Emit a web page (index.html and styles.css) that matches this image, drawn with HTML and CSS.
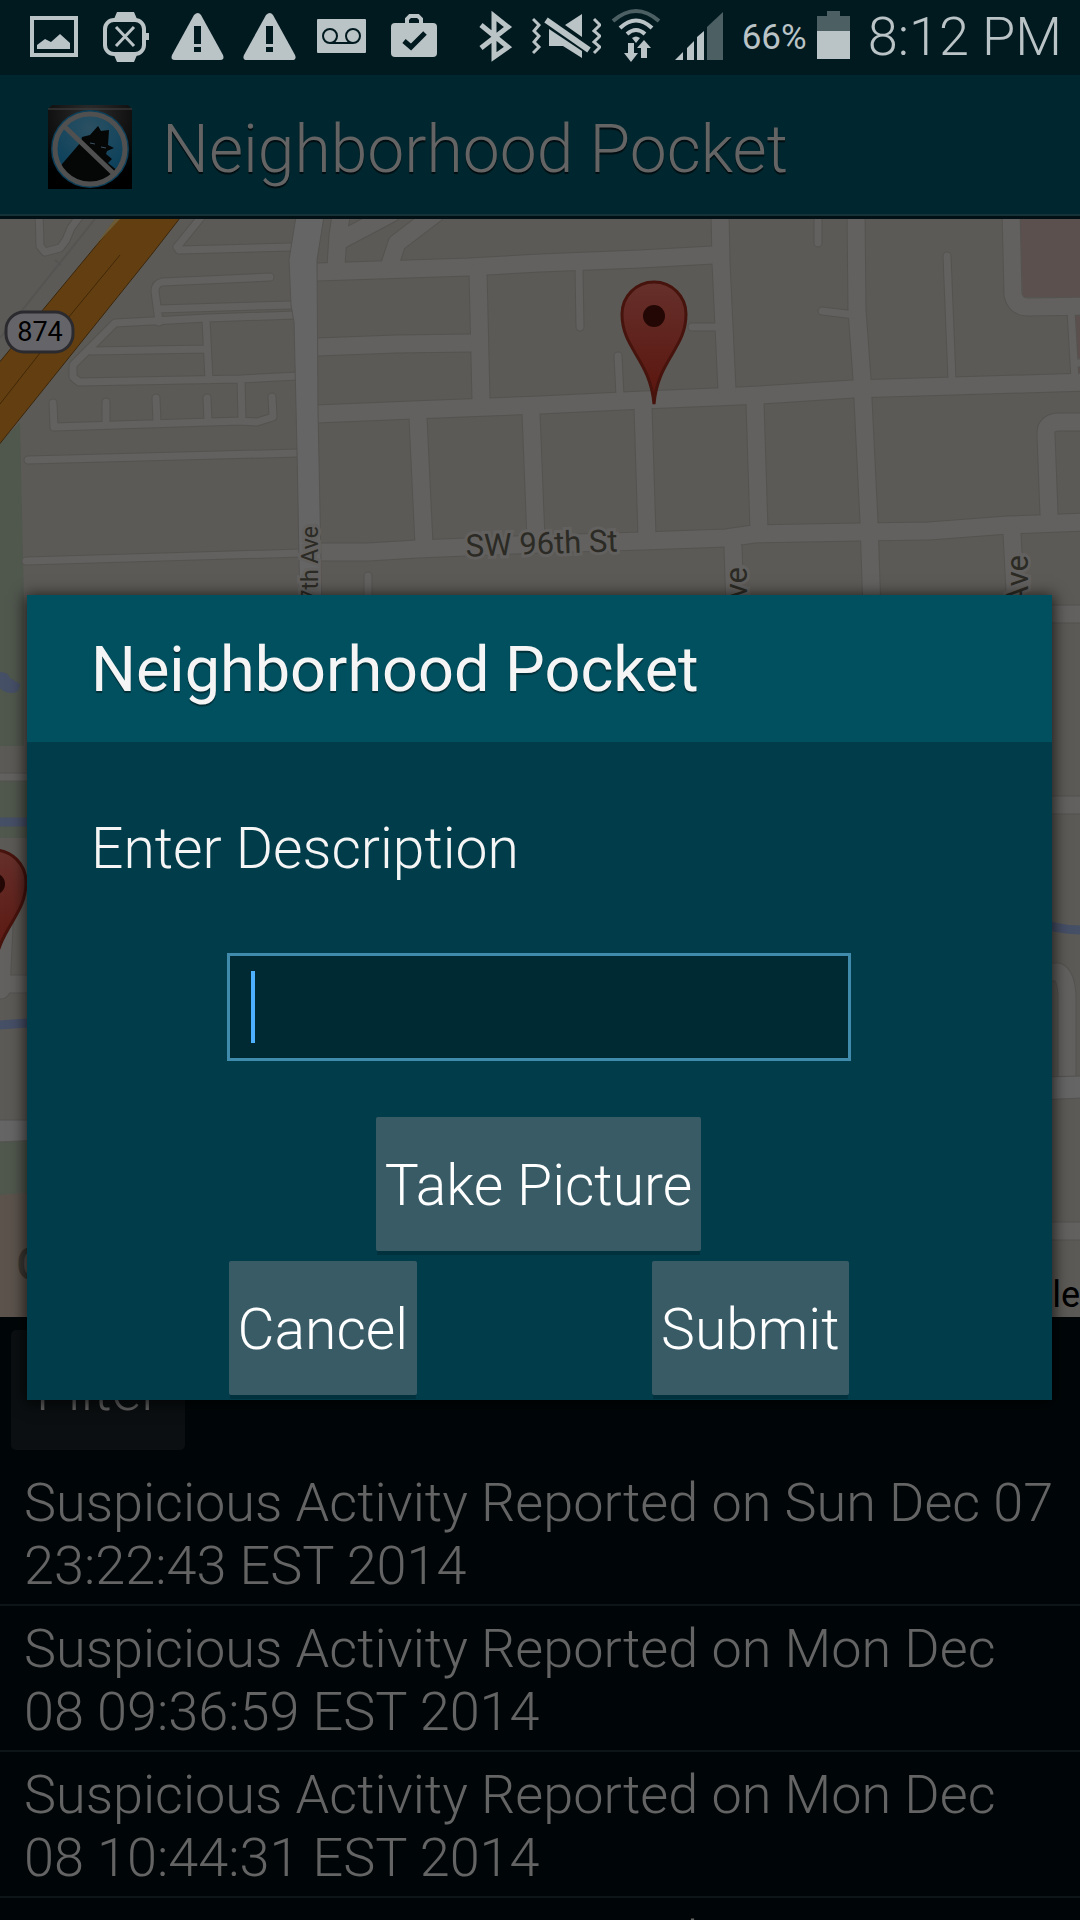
FILE: index.html
```html
<!DOCTYPE html>
<html lang="en">
<head>
<meta charset="utf-8">
<meta name="viewport" content="width=device-width, initial-scale=1">
<title>Neighborhood Pocket</title>
<link rel="stylesheet" href="styles.css">
</head>
<body>
<div class="screen">
  <div class="status-bar">
    <div class="notifications">
      <svg class="notice" viewBox="18 0 72 75" aria-hidden="true"><rect class="line" x="32" y="18" width="44" height="37" stroke-width="4"/><path class="solid" d="M37 49v-4l8-6 6 3 9-8 10 9v6z"/></svg>
      <svg class="notice" viewBox="90 0 72 75" aria-hidden="true"><rect class="line" x="105" y="20" width="39" height="34" rx="9" stroke-width="4"/><path class="solid" d="M117 12h17l3 7h-23zM114 55h23l-3 7h-17zM145 33h4v7h-4z"/><path class="line" d="M116 27l18 19M134 27l-18 19" stroke-width="3"/></svg>
      <svg class="notice" viewBox="162 0 72 75" aria-hidden="true"><path class="solid" d="M194 15q4-4 7 0l22 40q2 5-3 5h-45q-5 0-3-5z"/><path class="cut" d="M194 26h7v18h-7zM194 47h7v5h-7z"/></svg>
      <svg class="notice" viewBox="162 0 72 75" aria-hidden="true"><path class="solid" d="M194 15q4-4 7 0l22 40q2 5-3 5h-45q-5 0-3-5z"/><path class="cut" d="M194 26h7v18h-7zM194 47h7v5h-7z"/></svg>
      <svg class="notice" viewBox="306 0 72 75" aria-hidden="true"><rect class="solid" x="317" y="19" width="49" height="34" rx="1"/><g class="cut-line"><circle cx="330" cy="36" r="7"/><circle cx="353" cy="36" r="7"/><path d="M330 43h23"/></g></svg>
      <svg class="notice" viewBox="378 0 72 75" aria-hidden="true"><rect class="solid" x="391" y="23" width="46" height="34" rx="4"/><path class="line" d="M407 24v-5l3-3h8l3 3v5" stroke-width="4"/><path class="cut-line thick" d="M404 41l7 6 14-14"/></svg>
    </div>
    <div class="indicators">
      <svg width="43" height="75" viewBox="480 0 43 75" aria-hidden="true"><path class="line" d="M482 25l27 22-14 10V16l14 11-27 21" stroke-width="5"/></svg>
      <svg width="69" height="75" viewBox="533 0 69 75" aria-hidden="true"><path class="solid" d="M566 25l17-11v23zM550 29l33 22v7l-19-12h-14z"/><path class="line" d="M547 20l43 30" stroke-width="6"/><path class="line" d="M534 19l6 6-5 6 5 5-5 6 5 5-6 6M595 19l6 6-6 6 6 5-6 6 6 5-6 6" stroke-width="3"/></svg>
      <svg width="50" height="75" viewBox="612 0 50 75" aria-hidden="true"><path class="line dim-line" d="M614 21q23-20 46 0" stroke-width="4"/><path class="line" d="M621 28q16-15 32 0M628 34q9-8 18 0" stroke-width="4"/><path class="solid" d="M633 38q4-3 8 0l-4 5zM629 43h6v10h4l-7 9-7-9h4zM642 58V48h-4l7-8 7 8h-4v10z"/></svg>
      <svg width="61" height="75" viewBox="672 0 61 75" aria-hidden="true"><path class="solid" d="M676 60l8-8v8zM688 60V48l7-7v19zM698 60V37l7-6v29z"/><path class="dim" d="M708 60V27l16-15v48z"/></svg>
      <span class="percent">66%</span>
      <svg width="33" height="75" viewBox="817 0 33 75" aria-hidden="true"><path class="dim" d="M817 16h10v-5h13v5h10v15h-33z"/><path class="solid" d="M817 31h33v28h-33z"/></svg>
      <time class="clock">8:12 PM</time>
    </div>
  </div>

  <header class="app-bar">
    <svg class="app-icon" viewBox="48 105 84 84" aria-hidden="true">
      <defs>
        <radialGradient id="tile" cx=".5" cy=".1" r=".8"><stop offset="0" stop-color="#2c2c2c"/><stop offset="1" stop-color="#000"/></radialGradient>
        <radialGradient id="disc" cx=".5" cy=".2" r=".8"><stop offset="0" stop-color="#2b5062"/><stop offset="1" stop-color="#063e5a"/></radialGradient>
        <clipPath id="disc-clip"><circle cx="90" cy="149" r="35"/></clipPath>
      </defs>
      <path d="M48 109l4-4h76l4 4v80H48z" fill="url(#tile)"/><path d="M48 109h84" stroke="#444"/>
      <circle cx="90" cy="149" r="39" fill="#0c3f59"/>
      <circle cx="90" cy="149" r="35" fill="url(#disc)"/>
      <path clip-path="url(#disc-clip)" fill="#050606" d="M50 178l31-36 1-5 8-2 8-9 3 5 8-1-1 15 6 3-7 3-1 3 6 5-4 4 10 8v20H50z"/>
      <path d="M90 143l5 1M101 147l5 1" stroke="#3a5060"/>
      <circle cx="90" cy="149" r="35" fill="none" stroke="#505050" stroke-width="5"/>
      <path d="M65 127l48 46" stroke="#505050" stroke-width="5"/>
    </svg>
    <h1 class="app-title">Neighborhood Pocket</h1>
  </header>

  <main class="content">
    <svg class="map" viewBox="0 219 1080 1098" preserveAspectRatio="xMidYMin slice" role="img" aria-label="Neighborhood map">
      <defs>
        <g id="wide">
          <path d="M317 272L469 267 540 263 640 259 713 255M317 347L396 344 471 343M316 414L413 410 489 407 540 405 643 400 716 397 760 395 853 389 953 386 1090 382M320 552H368L417 549 540 544 643 541 726 538 754 534 860 532 929 531 1008 525 1090 522"/>
          <path d="M478 272L481 400M418 418L424 545M531 413L536 540M643 408L647 536M720 210L721 263 727 390M755 402L759 530M856 210L857 310 862 379 869 522 872 610M733 547L735 610M1012 533L1016 610M1011 210L1013 295Q1016 307 1028 307L1090 306M1090 422H1058Q1045 423 1046 435L1049 514"/>
          <path d="M342 210L338 235 336 266M341 240L392 213M435 214L397 243 390 264"/>
          <path d="M-10 984H40M1040 614H1090M1040 805H1090M1040 1231H1090M1040 972H1058Q1066 976 1067 995V1080M5 905L1 990"/>
        </g>
        <g id="narrow">
          <path d="M39 210L40 246 45 252 60 248 66 240 71 228 82 213M207 210L177 247 179 250 290 247M270 277L162 282Q155 284 155 291L159 322M158 309L291 305M296 315L207 318 115 323 73 365V377L79 382 241 379 298 376M91 351L207 349M206 320L209 380M241 380L242 420M53 403L54 427 241 421 257 422 273 417 272 397M106 402V425M156 398L157 423M207 398L208 421M28 460L298 453M26 561L302 553M368 576V610"/>
          <path d="M579 268L580 327M618 356L620 396M692 327H720M818 210V243M822 311L855 315M947 256L952 380M1071 310L1075 380M1074 363H1090M-10 777H40"/>
        </g>
        <g id="pin">
          <path d="M0 0C-4-45-32-55-32-90A32 32 0 0 1 32-90C32-55 4-45 0 0Z" fill="url(#pin-red)" stroke="#47130d" stroke-width="3"/>
          <circle cy="-88" r="11" fill="#230705"/>
        </g>
        <linearGradient id="pin-red" x1="0" y1="0" x2="0" y2="1"><stop offset="0" stop-color="#66302b"/><stop offset="1" stop-color="#5a140d"/></linearGradient>
      </defs>
      <rect y="219" width="1080" height="1098" fill="#5c5a56"/>
      <path d="M-1 444L20 422 24 600V746H-1zM-1 780H40V838H-1zM-1 1138H40V1192L-1 1195z" fill="#50574d"/>
      <path d="M-1 1195L40 1192V1317H-1z" fill="#5b534c"/>
      <path d="M1020 219L1023 297H1080V219zM1076 314H1080V358H1076zM1077 367H1080V372H1077z" fill="#5c504f"/>
      <path d="M95 219L0 338M55 260l6 5" stroke="#555452" stroke-width="2" fill="none"/>
      <g class="road-edge wide"><use href="#wide"/></g><g class="road-edge narrow"><use href="#narrow"/></g>
      <g class="road wide"><use href="#wide"/></g><g class="road narrow"><use href="#narrow"/></g>
      <path d="M297 210L289 260 291 305 294 322 297 450 300 610H322L318 410 317 260 325 210zM-2 1120H40V1140L-2 1142zM1040 1077L1082 1076V1098L1040 1100z" fill="#656566" stroke="#545350"/>
      <path d="M-1 822H40M-1 1025L40 1022M1040 922Q1056 930 1082 930" fill="none" stroke="#454f66" stroke-width="9"/>
      <path d="M0 672Q8 672 10 678L20 684Q20 694 10 693 3 692 0 688z" fill="#454f66"/>
      <path d="M119 218L-2 364V446L152 254 180 218z" fill="#633e10" stroke="#3a270d"/>
      <path d="M115 219L95 246 120 219z" fill="#6b5a33"/>
      <path d="M120 255L68 318M40 353L0 404" stroke="#402808"/>
      <rect x="6" y="312" width="67" height="40" rx="18" fill="#656569" stroke="#2b2b2f" stroke-width="3"/>
      <text class="shield-label" x="40" y="341">874</text>
      <text class="street" x="542" y="554" text-anchor="middle" transform="rotate(-2 542 554)">SW 96th St</text>
      <text class="street small-street" text-anchor="end" transform="translate(318 526) rotate(-90)">7th Ave</text>
      <text class="street" text-anchor="end" transform="translate(747 567) rotate(-90)">Ave</text>
      <text class="street" text-anchor="end" transform="translate(1028 555) rotate(-90)">Ave</text>
      <text class="map-logo" x="16" y="1280">G</text>
      <text class="map-credit" x="1080" y="1307" text-anchor="end">le</text>
      <use href="#pin" x="654" y="404"/>
      <use href="#pin" x="-6" y="972"/>
    </svg>
    <button class="filter" type="button">Filter</button>
    <ul class="reports">
      <li class="report">Suspicious Activity Reported on Sun Dec 07 23:22:43 EST 2014</li>
      <li class="report">Suspicious Activity Reported on Mon Dec 08 09:36:59 EST 2014</li>
      <li class="report">Suspicious Activity Reported on Mon Dec 08 10:44:31 EST 2014</li>
      <li class="report">Suspicious Activity Reported on Mon Dec</li>
    </ul>
  </main>

  <div class="overlay">
    <form class="dialog" role="dialog" aria-labelledby="dialog-title">
      <h2 class="dialog-title" id="dialog-title">Neighborhood Pocket</h2>
      <div class="dialog-body">
        <label class="field-label" for="description">Enter Description</label>
        <input class="field" id="description" type="text">
        <button class="btn" type="button">Take Picture</button>
        <div class="actions">
          <button class="btn" type="button">Cancel</button>
          <button class="btn" type="submit">Submit</button>
        </div>
      </div>
    </form>
  </div>
</div>
</body>
</html>
```

FILE: styles.css
```css
* {
  box-sizing: border-box;
}

body {
  margin: 0;
  background: #000608;
  font-family: Roboto, "Noto Sans", sans-serif;
  font-weight: 300;
}

.screen {
  position: relative;
  display: flex;
  flex-direction: column;
  height: 100vh;
  overflow: hidden;
}

.status-bar {
  display: flex;
  justify-content: space-between;
  height: 75px;
  padding: 0 18px;
  background: #001a20;
  color: #bac3c5;
}

.notifications,
.indicators {
  display: flex;
  align-items: center;
}

.indicators {
  gap: 10px;
}

.notice {
  width: 72px;
  height: 75px;
}

.solid {
  fill: #bac3c5;
}

.line {
  fill: none;
  stroke: #bac3c5;
}

.dim {
  fill: #4c5f63;
}

.dim-line {
  stroke: #4c5f63;
}

.cut {
  fill: #001a20;
}

.cut-line {
  fill: none;
  stroke: #001a20;
  stroke-width: 2;
}

.thick {
  stroke-width: 5;
}

.percent {
  font-size: 35px;
  font-weight: 400;
}

.clock {
  padding: 0 0 2px 8px;
  font-size: 54px;
}

.app-bar {
  display: flex;
  align-items: center;
  gap: 30px;
  height: 144px;
  padding: 3px 48px 0;
  background: #00272f;
  border-bottom: 3px solid #001014;
  box-shadow: inset 0 -2px #143238;
}

.app-icon {
  width: 84px;
  height: 84px;
}

.app-title {
  margin: 0;
  padding-top: 6px;
  color: #646464;
  font-size: 66px;
  font-weight: 300;
  line-height: 78px;
  text-shadow: 0 2px 1px #000c10;
}

.content {
  display: flex;
  flex: 1;
  flex-direction: column;
  min-height: 0;
}

.map {
  flex: none;
  width: 100%;
  height: 1098px;
}

.road-edge,
.road {
  fill: none;
  stroke-linecap: round;
  stroke-linejoin: round;
}

.road-edge {
  stroke: #545350;
}

.road {
  stroke: #62615f;
}

.road.wide {
  stroke-width: 17px;
}

.road-edge.wide {
  stroke-width: 19px;
}

.road.narrow {
  stroke-width: 7px;
}

.road-edge.narrow {
  stroke-width: 9px;
}

.street {
  fill: #2b2a24;
  stroke: #62615f;
  stroke-width: 6px;
  paint-order: stroke;
  font-size: 31px;
  font-weight: 400;
}

.small-street {
  font-size: 23px;
}

.shield-label {
  fill: #000;
  font-size: 27px;
  font-weight: 400;
  text-anchor: middle;
}

.map-logo {
  fill: #3b3833;
  font-size: 46px;
  font-weight: 500;
}

.map-credit {
  fill: #000;
  font-size: 36px;
  font-weight: 400;
}

.filter {
  align-self: flex-start;
  flex: none;
  width: 174px;
  height: 120px;
  margin: 13px 11px 10px;
  padding: 0;
  border: 0;
  border-radius: 5px;
  background: #0b0f11;
  color: #646464;
  font: inherit;
  font-size: 57px;
}

.reports {
  flex: 1;
  min-height: 0;
  margin: 0;
  padding: 0;
  overflow: hidden;
  list-style: none;
}

.report {
  padding: 11px 24px 7px;
  border-bottom: 2px solid #0d1518;
  color: #646464;
  font-size: 54px;
  line-height: 63px;
}

.overlay {
  position: absolute;
  inset: 75px 0 0;
  display: flex;
  align-items: center;
  padding: 0 28px 0 27px;
}

.dialog {
  width: 100%;
  background: #003c49;
  box-shadow: 0 2px 14px 2px rgba(0, 0, 0, .7);
}

.dialog-title {
  margin: 0;
  padding: 37px 64px 35px;
  background: #00505f;
  color: #f5f5f5;
  font-size: 63px;
  font-weight: 400;
  line-height: 75px;
  text-shadow: 0 2px 1px #002f38;
}

.dialog-body {
  display: flex;
  flex-direction: column;
  align-items: center;
  padding: 74px 2px 5px 0;
}

.field-label {
  align-self: flex-start;
  padding: 0 64px;
  color: #f5f5f5;
  font-size: 57px;
  line-height: 66px;
}

.field {
  width: 624px;
  max-width: 100%;
  height: 108px;
  margin: 71px 0 56px;
  padding: 0 22px;
  border: 3px solid #408aac;
  border-radius: 0;
  outline: 0;
  background: linear-gradient(#4db1ff, #4db1ff) 21px 15px / 4px 72px no-repeat #002a33;
  color: #f5f5f5;
  font: inherit;
  font-size: 57px;
}

.btn {
  height: 134px;
  padding: 3px 9px 0;
  border: 0;
  border-radius: 2px;
  background: #385b66;
  box-shadow: 0 5px 0 -1px #00313d;
  color: #fff;
  font: inherit;
  font-size: 57px;
  white-space: nowrap;
}

.actions {
  display: flex;
  justify-content: space-between;
  width: 620px;
  max-width: 100%;
  margin-top: 10px;
}
```
